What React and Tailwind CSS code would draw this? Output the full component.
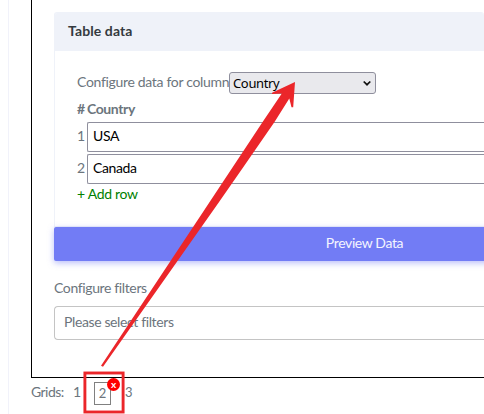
import React from "react";

const rows = [
  { id: 1, value: "USA", text: "tracking-[-0.3px]" },
  { id: 2, value: "Canada", text: "tracking-[-0.4px]" },
];

function TableCard() {
  return (
    <section className="h-[215px] rounded-t-[3px] border border-r-0 border-[#eff2f9]">
      <header className="flex h-[38px] items-center rounded-t-[2px] bg-[#eff2f9] pb-[3px] pl-[13px] font-bold leading-5 tracking-[0.1px] text-[#343a40]">
        <h2>Table data</h2>
      </header>
      <div className="pl-[22px] pt-[21px]">
        <div className="flex h-[22px] items-center">
          <span className="w-[152px] whitespace-nowrap pb-[2px] tracking-[-0.32px]">Configure data for column</span>
          <button className="flex h-[22px] w-[147px] items-center justify-between rounded-[3px] border border-[#8f8f9d] bg-[#e9e9ed] pl-[3px] pr-[4px] font-['Noto_Sans',sans-serif] text-[13px] tracking-[-0.35px] text-black">
            <span>Country</span>
            <svg className="h-2 w-2" viewBox="0 0 8 8" fill="none" stroke="#111" strokeWidth="1.7">
              <path d="M.7 2.5 4 5.7 7.3 2.5" />
            </svg>
          </button>
        </div>
        <div className="flex h-[28px] items-center pt-px font-bold tracking-[-0.4px] text-[#6c757d]">
          <span className="w-[10px]">#</span>
          <span>Country</span>
        </div>
        <div className="flex flex-col gap-[2px]">
          {rows.map((row) => (
            <div key={row.id} className="flex h-[30px] items-center">
              <span className="w-[10px] pb-[2px]">{row.id}</span>
              <div className="flex h-[30px] flex-1 items-center rounded-l-[2px] border border-r-0 border-[#8f8f9d] pb-[2px] pl-[5px] text-black">
                <span className={row.text}>{row.value}</span>
              </div>
            </div>
          ))}
        </div>
        <div className="flex h-[21px] items-center pb-[2px] tracking-[-0.3px] text-[#008000]">+ Add row</div>
      </div>
    </section>
  );
}

export default function App() {
  return (
    <div className="relative flex h-[414px] w-[484px] overflow-hidden bg-white font-['Lato',sans-serif] text-[14px] leading-5 text-[#6c757d]">
      <div className="w-[9px] shrink-0 border-r border-[#f1f2fa]" />
      <main className="flex min-w-0 flex-1 flex-col pl-[22px]">
        <div className="h-[378px] border-b border-l border-black pl-[22px] pt-[12px]">
          <TableCard />
          <button className="flex h-[34px] w-[621px] items-center justify-center rounded-[2px] bg-[#727cf5] pb-[2px] tracking-[-0.38px] text-[#f4f5ff] shadow-[0_2px_6px_0_rgba(114,124,245,0.5)]">
            Preview Data
          </button>
          <div className="flex h-[45px] items-center pt-[8px] tracking-[-0.37px]">Configure filters</div>
          <div className="flex h-[34px] items-center rounded-l-[4px] border border-r-0 border-[#c4c4c4] pb-[2px] pl-[9px] tracking-[-0.38px]">
            Please select filters
          </div>
        </div>
        <div className="flex h-[36px] items-start pt-[4px]">
          <span className="w-[42px] tracking-[-0.55px]">Grids:</span>
          <span className="w-[21px]">1</span>
          <span className="relative flex h-[23px] w-[17px] items-center justify-center border border-[#808080] pb-px text-[13px]">
            2
            <span className="absolute -right-[10px] -top-[5px] flex size-[13px] items-center justify-center rounded-full bg-[#f00] pb-px text-[10px] font-bold leading-none text-white">
              x
            </span>
          </span>
          <span className="ml-[14px] text-[13px]">3</span>
        </div>
      </main>
      <svg className="pointer-events-none absolute inset-0" width="484" height="414" viewBox="0 0 484 414">
        <rect x="84.9" y="373" width="38.2" height="39" fill="none" stroke="#eb262a" strokeWidth="2.9" />
        <path d="M101 365.8 205 209 262.6 122 281.8 93.4 272 94 272 92.7 295 82 293.2 107.3 291.5 107.3 289.3 98.5 274.5 122 242 169 218 203.5 103 366.8Z" fill="#eb262a" />
      </svg>
    </div>
  );
}
